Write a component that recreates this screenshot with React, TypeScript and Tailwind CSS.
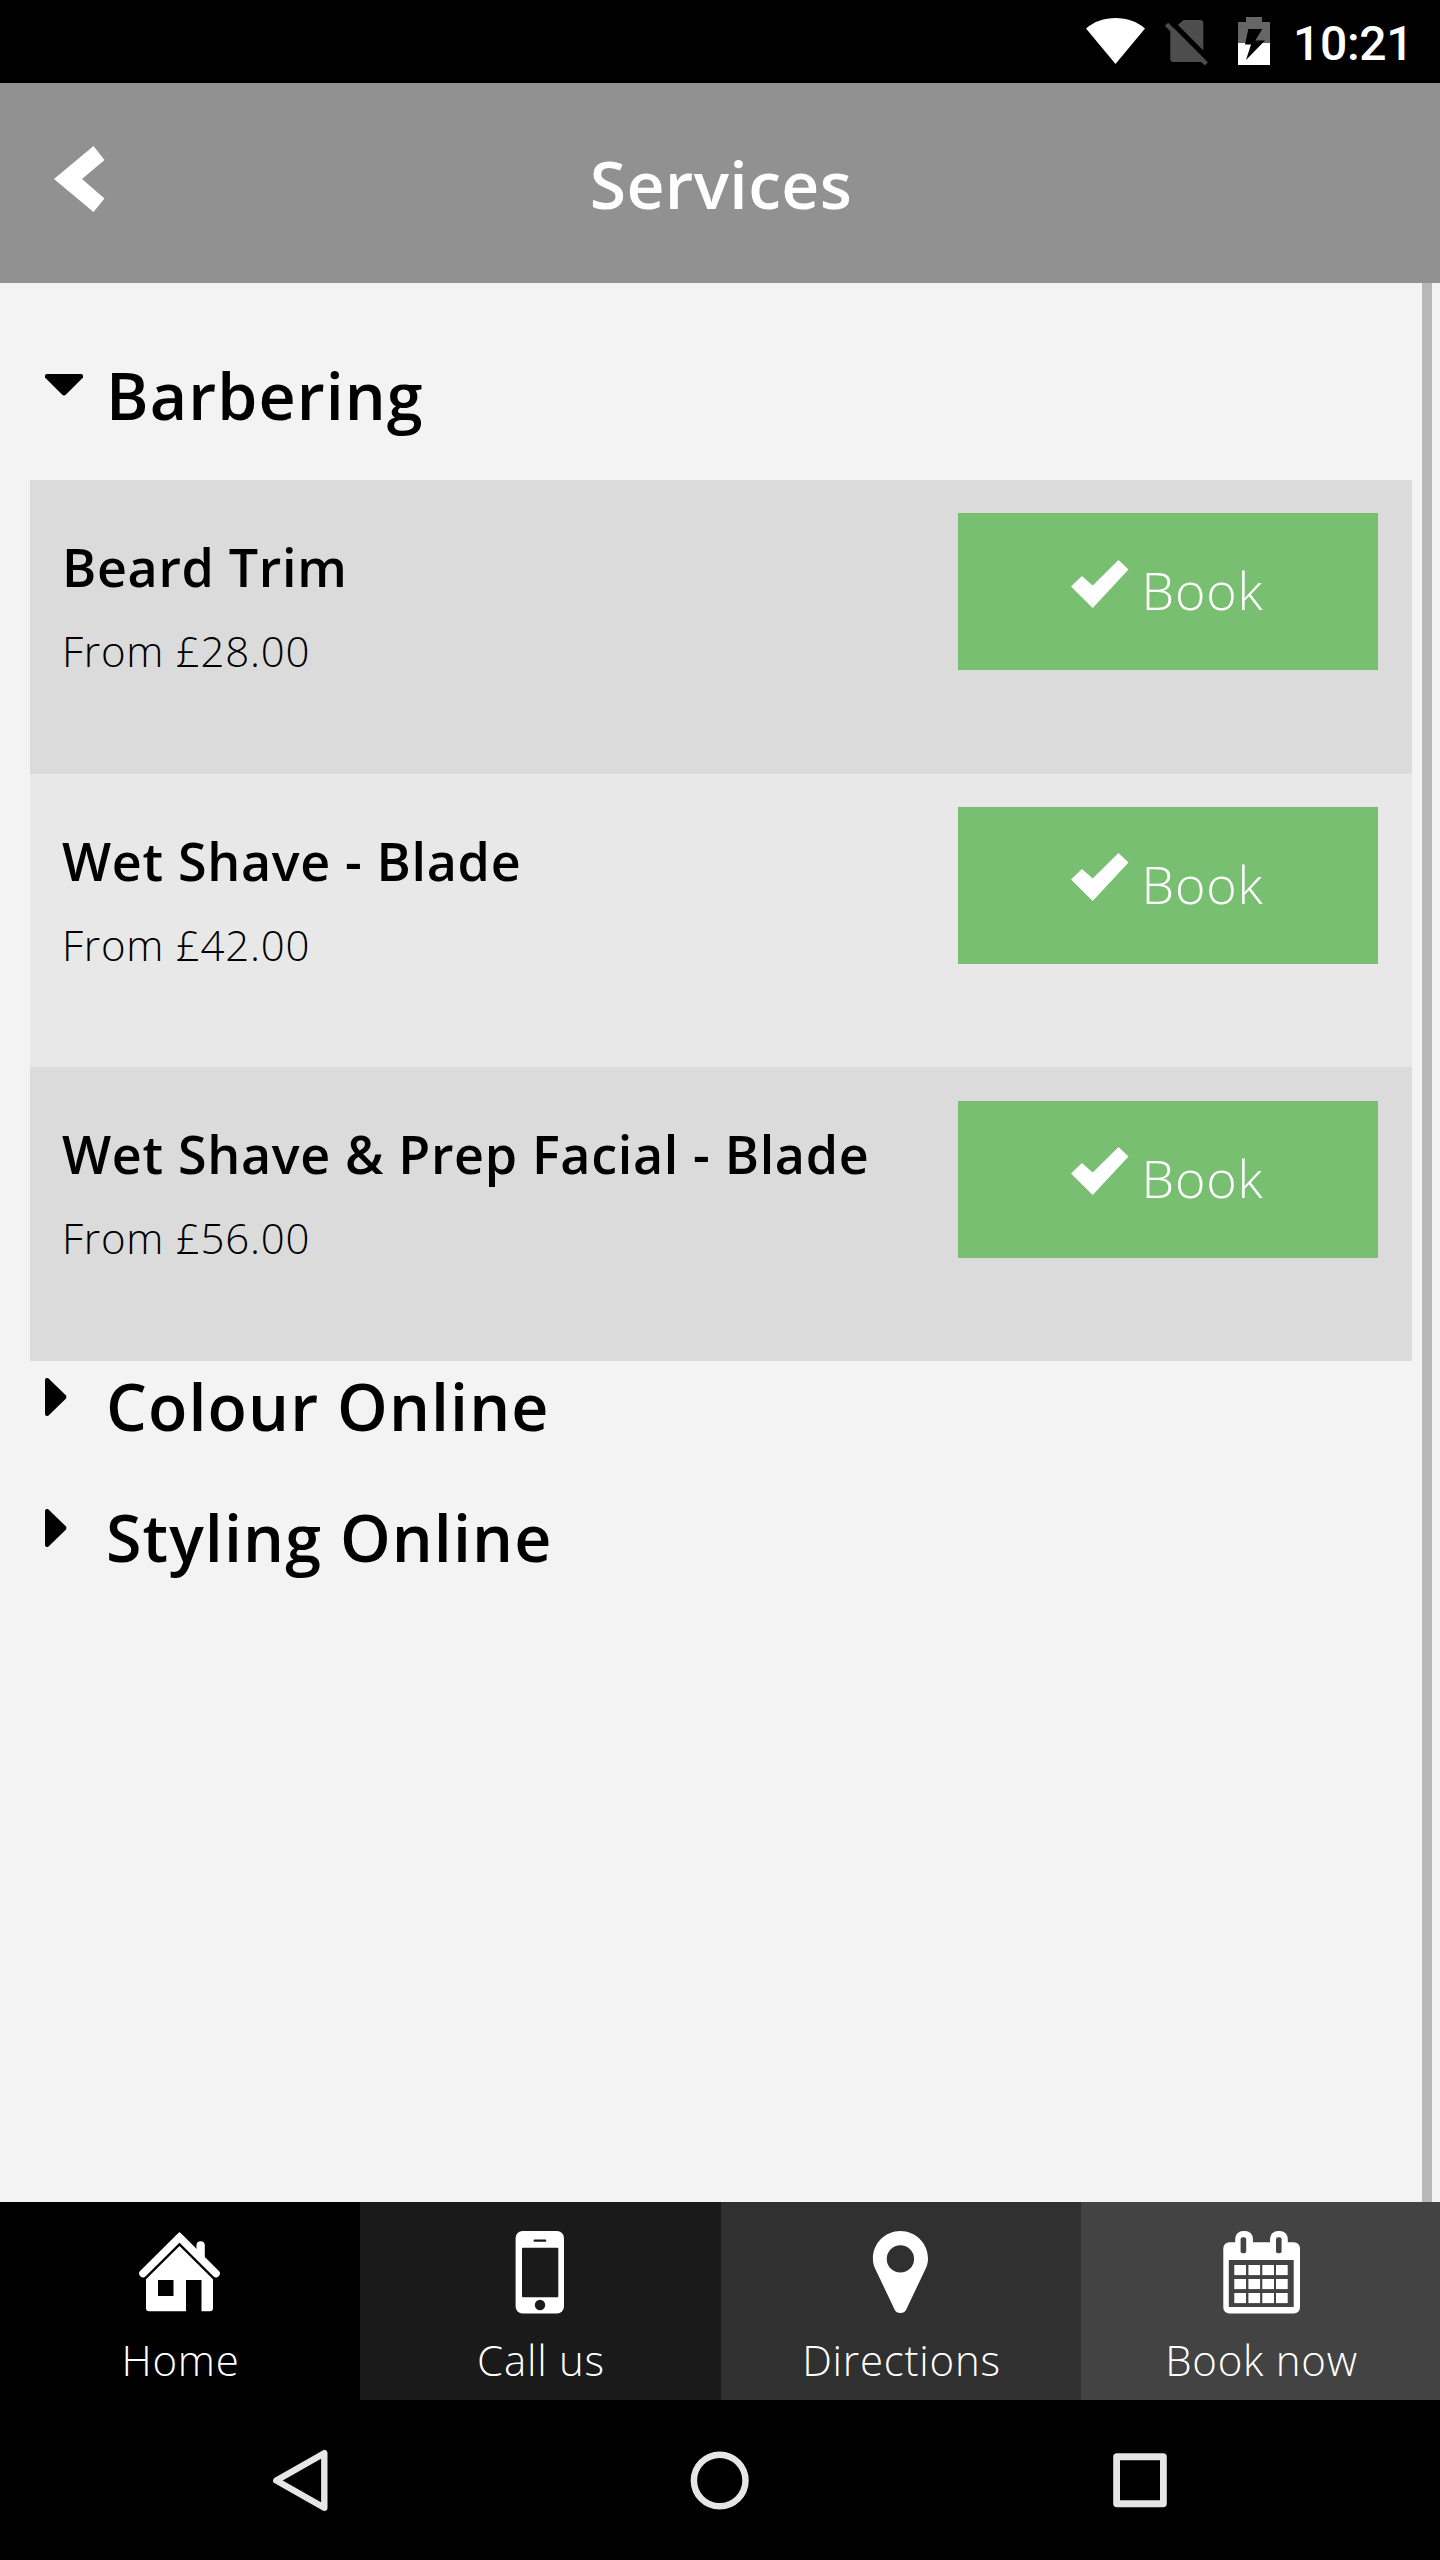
import React from "react";

const services = [
  { name: "Beard Trim", price: "From £28.00" },
  { name: "Wet Shave - Blade", price: "From £42.00" },
  { name: "Wet Shave & Prep Facial - Blade", price: "From £56.00" },
];

function StatusBar() {
  return (
    <div className="flex h-[83px] shrink-0 bg-black pl-[1086px]">
      <svg className="mr-5 h-[83px] w-[59px] shrink-0" viewBox="0 0 59 83">
        <path d="M0 28.5C8 21.5 18 18 29.5 18S51 21.5 59 28.5L29.5 64Z" fill="#fff" />
      </svg>
      <svg className="mr-[29px] h-[83px] w-11 shrink-0" viewBox="0 0 44 83">
        <path
          d="M18.5 20H35Q38.3 20 38.3 23.3V58.7Q38.3 62 35 62H8.6Q5.3 62 5.3 58.7V31.5Z"
          fill="#4d4d4d"
        />
        <path d="M2 17.5L46 62" stroke="#000" strokeWidth="5.2" />
        <path d="M1.5 24.3L41.3 63.8" stroke="#4d4d4d" strokeWidth="4.6" />
      </svg>
      <svg className="mr-[23px] h-[83px] w-8 shrink-0" viewBox="0 0 32 83">
        <path d="M8 17H24V22H32V43H0V22H8Z" fill="#666" />
        <path d="M0 43H32V65H0Z" fill="#fff" />
        <path d="M10.3 29H24.3L17.3 40.5H27L8 60L13 44.5H7Z" fill="#000" />
      </svg>
      <span className="font-['Roboto',sans-serif] text-[48px] leading-[87px] font-medium tracking-[-0.3px] text-white">
        10:21
      </span>
    </div>
  );
}

function Header() {
  return (
    <div className="relative flex h-[200px] shrink-0 items-center justify-center bg-[#919191] pl-[2px]">
      <svg className="absolute top-[63px] left-[54px] h-[66px] w-[51px]" viewBox="0 0 51 66">
        <path d="M39.5 0L50.5 14L28 33L50.5 52.5L39.5 66L0 33Z" fill="#fff" />
      </svg>
      <h1 className="text-[66px] leading-[90px] font-semibold tracking-[0.4px] text-white">Services</h1>
    </div>
  );
}

function Category({ label, open }: { label: string; open?: boolean }) {
  return (
    <div className="flex h-[90px] pl-[45px]">
      <svg className="mt-[17px] mr-[23px] h-[38px] w-[38px] shrink-0" viewBox="0 0 38 38">
        {open ? (
          <path d="M2 7H36Q38 7 38 9V10.5L21 27.5Q19 29.5 17 27.5L0 10.5V9Q0 7 2 7Z" />
        ) : (
          <path d="M0 2Q0 0 2 0H3L20.8 17.3Q22 19 20.8 20.7L3 38H2Q0 38 0 36Z" />
        )}
      </svg>
      <h2 className="text-[64.5px] leading-[90px] font-semibold tracking-[1.12px]">{label}</h2>
    </div>
  );
}

function ServiceRow({ name, price }: { name: string; price: string }) {
  return (
    <li className="flex h-[293.67px] items-start justify-between pr-[34px] pl-8 odd:bg-[#dbdbdb] even:bg-[#e8e8e8]">
      <div className="pt-[47px]">
        <h3 className="text-[52px] leading-[80px] font-semibold tracking-[0.68px] whitespace-nowrap">{name}</h3>
        <p className="mt-[14px] text-[42px] leading-[60px] font-light tracking-[0.75px]">{price}</p>
      </div>
      <button className="mt-[33.3px] flex h-[157px] w-[420px] shrink-0 items-start bg-[#78bf71] pl-[112.6px] text-white">
        <svg className="mt-[46.4px] mr-[13px] h-12 w-[58px] shrink-0" viewBox="0 0 58 48">
          <path d="M0 26.5L11 16L21.7 25.5L47.5 0L57.5 9.5L21.7 48Z" fill="#fff" />
        </svg>
        <span className="text-[52px] leading-[154px] font-light tracking-[0.8px]">Book</span>
      </button>
    </li>
  );
}

function HomeIcon() {
  return (
    <svg className="h-[84px] w-[84px]" viewBox="0 0 84 84" fill="#fff">
      <path d="M58.5 26V14.3Q58.5 10.3 62.6 10.3T66.8 14.3V34Z" />
      <path
        d="M41.5 6.3L5 42.5M41.5 6.3L78 42.5"
        stroke="#fff"
        strokeWidth="7.6"
        strokeLinecap="round"
      />
      <path d="M36 7L41.5 1L47 7L41.5 11.5Z" />
      <path
        fillRule="evenodd"
        d="M41.5 15L75 48.3V77.3Q75 80.3 72 80.3H63.5V49H48V80.3H11Q8 80.3 8 77.3V48.3ZM20 49V65H35.5V49Z"
      />
    </svg>
  );
}

function PhoneIcon() {
  return (
    <svg className="mr-px h-[84px] w-[84px]" viewBox="0 0 84 84">
      <rect x="17.6" y="0" width="48.4" height="82.5" rx="7" fill="#fff" />
      <rect x="24" y="16.7" width="36.3" height="49.6" rx="1" fill="#1a1a1a" />
      <rect x="35.5" y="8.4" width="12.8" height="2.3" rx="1" fill="#1a1a1a" />
      <circle cx="42" cy="74" r="5.2" fill="#1a1a1a" />
    </svg>
  );
}

function PinIcon() {
  return (
    <svg className="mr-[2px] h-[84px] w-[84px]" viewBox="0 0 84 84">
      <path
        fillRule="evenodd"
        fill="#fff"
        d="M42.4 0C57.5 0 70 12.3 70 27.5C70 31 69.3 33.8 68.2 36.5L48 79Q46.5 82 42.4 82T36.8 79L16.6 36.5C15.5 33.8 14.9 31 14.9 27.5C14.9 12.3 27.3 0 42.4 0ZM42.4 14.3A13.6 13.6 0 1 0 42.4 41.6A13.6 13.6 0 1 0 42.4 14.3Z"
      />
    </svg>
  );
}

function CalendarIcon() {
  const columns = [15.3, 29.4, 43.3, 57];
  const lines = [34, 48, 62];
  return (
    <svg className="h-[84px] w-[84px]" viewBox="0 0 84 84" fill="#fff">
      <rect x="4.3" y="11.3" width="76.7" height="71.2" rx="6" />
      <rect x="16.2" y="0" width="17.8" height="28" rx="8" />
      <rect x="51" y="0" width="17.8" height="28" rx="8" />
      <g fill="#434343">
        <rect x="21.6" y="6.3" width="5.6" height="16" rx="2" />
        <rect x="57" y="6.3" width="5.6" height="16" rx="2" />
        <rect x="9.8" y="29" width="64.9" height="47" />
      </g>
      {lines.map((y) => columns.map((x) => <rect key={`${x}-${y}`} x={x} y={y} width="11.7" height="10.1" />))}
    </svg>
  );
}

function Tab({ label, className, children }: { label: string; className: string; children: React.ReactNode }) {
  return (
    <a className={`flex h-[198px] flex-col items-center pt-[29px] text-white ${className}`}>
      {children}
      <span className="mt-[15px] pl-px text-[42px] leading-[60px] font-light tracking-[0.75px] whitespace-nowrap">
        {label}
      </span>
    </a>
  );
}

export default function App() {
  return (
    <div className="flex h-[2560px] w-[1440px] flex-col overflow-hidden bg-[#f3f3f3] font-['Open_Sans',sans-serif] text-black">
      <StatusBar />
      <Header />
      <main className="flex min-h-0 flex-1">
        <div className="w-[1412px] pt-[67px]">
          <Category label="Barbering" open />
          <ul className="mt-10 ml-[30px]">
            {services.map((s) => (
              <ServiceRow key={s.name} {...s} />
            ))}
          </ul>
          <Category label="Colour Online" />
          <div className="mt-[41px]">
            <Category label="Styling Online" />
          </div>
        </div>
        <div className="ml-[10px] w-[10px] bg-[#b7b7b7]" />
      </main>
      <nav className="grid shrink-0 grid-cols-[360px_361px_360px_359px]">
        <Tab label="Home" className="bg-black">
          <HomeIcon />
        </Tab>
        <Tab label="Call us" className="bg-[#1a1a1a]">
          <PhoneIcon />
        </Tab>
        <Tab label="Directions" className="bg-[#303030]">
          <PinIcon />
        </Tab>
        <Tab label="Book now" className="bg-[#434343] pl-px">
          <CalendarIcon />
        </Tab>
      </nav>
      <div className="flex h-40 shrink-0 justify-center bg-black">
        <div className="grid w-[1260px] grid-cols-3 place-items-center">
          <svg className="h-16 w-16" viewBox="0 0 64 64" fill="none" stroke="#e6e6e6" strokeWidth="6.4" strokeLinejoin="round">
            <path d="M56.3 5.2V59.8L8.3 32.5Z" />
          </svg>
          <svg className="h-16 w-16" viewBox="0 0 64 64" fill="none" stroke="#e6e6e6" strokeWidth="6.5">
            <circle cx="31.7" cy="32.5" r="25.8" />
          </svg>
          <svg className="h-16 w-16" viewBox="0 0 64 64" fill="#e6e6e6">
            <path
              fillRule="evenodd"
              d="M9 5.3H55Q58.8 5.3 58.8 9V55.5Q58.8 59.3 55 59.3H9Q5.2 59.3 5.2 55.5V9Q5.2 5.3 9 5.3ZM12 12.3V52.3H52V12.3Z"
            />
          </svg>
        </div>
      </div>
    </div>
  );
}
